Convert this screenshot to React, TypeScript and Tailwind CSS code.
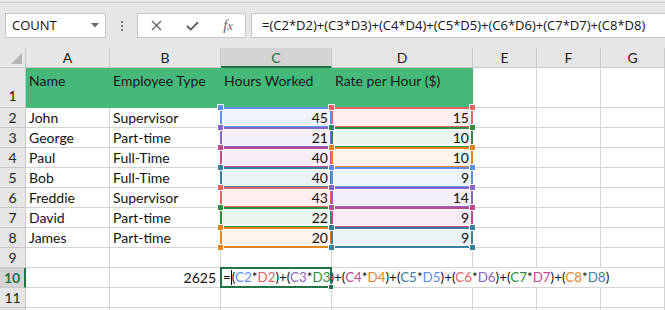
import React from "react";

type Pal = { border: string; bg: string; fill: string; text: string };
const P: Record<string, Pal> = {
  blue: { border: "border-[#5b8ef0]", bg: "bg-[#5b8ef0]", fill: "bg-[#eef3fd]", text: "text-[#5b8ef0]" },
  red: { border: "border-[#e8605f]", bg: "bg-[#e8605f]", fill: "bg-[#fdefef]", text: "text-[#e8605f]" },
  purple: { border: "border-[#8b62c8]", bg: "bg-[#8b62c8]", fill: "bg-[#f3eff9]", text: "text-[#8b62c8]" },
  green: { border: "border-[#2e8c40]", bg: "bg-[#2e8c40]", fill: "bg-[#ebf4ed]", text: "text-[#2e8c40]" },
  magenta: { border: "border-[#c1478e]", bg: "bg-[#c1478e]", fill: "bg-[#f8edf4]", text: "text-[#c1478e]" },
  orange: { border: "border-[#e5841f]", bg: "bg-[#e5841f]", fill: "bg-[#fcf3ea]", text: "text-[#e5841f]" },
  teal: { border: "border-[#3a7f9e]", bg: "bg-[#3a7f9e]", fill: "bg-[#ebf2f5]", text: "text-[#3a7f9e]" },
};

const rows: [string, string, number, number, string, string][] = [
  ["John", "Supervisor", 45, 15, "blue", "red"],
  ["George", "Part-time", 21, 10, "purple", "green"],
  ["Paul", "Full-Time", 40, 10, "magenta", "orange"],
  ["Bob", "Full-Time", 40, 9, "teal", "blue"],
  ["Freddie", "Supervisor", 43, 14, "red", "purple"],
  ["David", "Part-time", 22, 9, "green", "magenta"],
  ["James", "Part-time", 20, 9, "orange", "teal"],
];

const grid = "border-r border-b border-[#d4d4d4]";
const rowHead =
  "h-5 flex items-center justify-center bg-[#e6e6e6] border-r border-b border-[#c8c8c8] text-[14px] text-[#222]";

function Handle({ c, pos }: { c: Pal; pos: string }) {
  return <div className={`absolute w-[7px] h-[7px] border border-white ${c.bg} ${pos}`} />;
}

function RefCell({ v, c }: { v: number; c: Pal }) {
  return (
    <div className={`relative h-5 ${grid}`}>
      <div className={`absolute inset-[2px] ${c.fill}`} />
      <div className={`absolute inset-[-1px] border-2 ${c.border}`} />
      <Handle c={c} pos="left-[-4px] top-[-4px]" />
      <Handle c={c} pos="right-[-4px] top-[-4px]" />
      <Handle c={c} pos="left-[-4px] bottom-[-4px]" />
      <Handle c={c} pos="right-[-4px] bottom-[-4px]" />
      <div className="relative h-full flex items-end justify-end pr-[3px] leading-[19px]">{v}</div>
    </div>
  );
}

function Txt({ children, right }: { children?: React.ReactNode; right?: boolean }) {
  return (
    <div
      className={`h-5 ${grid} flex items-end leading-[19px] whitespace-nowrap ${
        right ? "justify-end pr-[4px]" : "pl-[3px]"
      }`}
    >
      {children}
    </div>
  );
}

function Formula() {
  const parts: [string, string][] = [];
  rows.forEach((r, i) => {
    if (i > 0) parts.push(["+", ""]);
    parts.push(["(", ""]);
    parts.push([`C${i + 2}`, P[r[4]].text]);
    parts.push(["*", ""]);
    parts.push([`D${i + 2}`, P[r[5]].text]);
    parts.push([")", ""]);
  });
  return (
    <span>
      {parts.map((p, i) => (
        <span key={i} className={p[1]}>
          {p[0]}
        </span>
      ))}
    </span>
  );
}

export default function App() {
  const colHead =
    "h-5 flex items-center justify-center bg-[#e6e6e6] border-r border-b border-[#c8c8c8] text-[14px] text-[#222]";
  return (
    <div className="w-[665px] h-[310px] overflow-hidden bg-white font-['Lato',sans-serif] text-[14px] text-[#111]">
      {/* toolbar */}
      <div className="h-[48px] bg-[#e6e6e6] pt-[2px]">
        <div className="h-full border-t border-[#cacaca] flex items-start pt-[10px] font-['Open_Sans',sans-serif]">
          <div className="ml-[5px] w-[101px] h-[25px] bg-white border border-[#c6c6c6] flex items-center pl-[6px] pr-[6px] text-[13px] text-[#111]">
            <span className="flex-1">COUNT</span>
            <svg width="8" height="5" viewBox="0 0 8 5">
              <path d="M0 0 L8 0 L4 4.5 Z" fill="#6b6b6b" />
            </svg>
          </div>
          <div className="w-[31px] h-[25px] flex flex-col items-center justify-center gap-[2px]">
            <div className="w-[2px] h-[2px] bg-[#7a7a7a]" />
            <div className="w-[2px] h-[2px] bg-[#7a7a7a]" />
            <div className="w-[2px] h-[2px] bg-[#7a7a7a]" />
          </div>
          <div className="w-[109px] h-[25px] bg-white border border-[#c6c6c6] flex items-center">
            <div className="w-[36px] flex justify-center pl-[1px]">
              <svg width="11" height="11" viewBox="0 0 11 11">
                <path d="M1 1 L10 10 M10 1 L1 10" stroke="#666" strokeWidth="1.4" />
              </svg>
            </div>
            <div className="w-[37px] flex justify-center">
              <svg width="13" height="10" viewBox="0 0 13 10">
                <path d="M1 5 L4.8 8.6 L12 1.2" stroke="#555" strokeWidth="1.8" fill="none" />
              </svg>
            </div>
            <div className="w-[34px] flex justify-center">
              <span className="font-['Liberation_Serif',serif] italic text-[15px] leading-none text-[#666]">
                f<span className="text-[12px]">x</span>
              </span>
            </div>
          </div>
          <div className="ml-[5px] flex-1 h-[25px] bg-white border border-r-0 border-[#c6c6c6] flex items-center pl-[10px] text-[13px] text-[#111] whitespace-nowrap">
            =(C2*D2)+(C3*D3)+(C4*D4)+(C5*D5)+(C6*D6)+(C7*D7)+(C8*D8)
          </div>
        </div>
      </div>

      {/* sheet */}
      <div className="grid grid-cols-[26px_84px_111px_111px_141px_64px_64px_64px]">
        {/* column header */}
        <div className="h-5 bg-[#e6e6e6] border-r border-b border-[#c8c8c8] relative">
          <svg className="absolute right-[3px] bottom-[3px]" width="11" height="11" viewBox="0 0 11 11">
            <path d="M11 0 L11 11 L0 11 Z" fill="#b5b5b5" />
          </svg>
        </div>
        <div className={colHead}>A</div>
        <div className={colHead}>B</div>
        <div className="h-5 flex items-center justify-center bg-[#d3d3d3] border-r border-[#c8c8c8] border-b-2 border-b-[#217346] text-[14px] text-[#217346]">
          C
        </div>
        <div className={colHead}>D</div>
        <div className={colHead}>E</div>
        <div className={colHead}>F</div>
        <div className={colHead}>G</div>

        {/* row 1 */}
        <div className="h-10 flex items-end justify-center pb-[1px] bg-[#e6e6e6] border-r border-b border-[#c8c8c8] text-[14px] text-[#222]">
          1
        </div>
        <div className="col-span-4 h-10 bg-[#45b87a] grid grid-cols-[84px_111px_111px_141px] text-[#1a1a1a]">
          <div className="pl-[3px] pt-[2px]">Name</div>
          <div className="pl-[3px] pt-[2px]">Employee Type</div>
          <div className="pl-[3px] pt-[2px]">Hours Worked</div>
          <div className="pl-[3px] pt-[2px]">Rate per Hour ($)</div>
        </div>
        <div className={`h-10 ${grid}`} />
        <div className={`h-10 ${grid}`} />
        <div className={`h-10 ${grid}`} />

        {rows.map((r, i) => (
          <React.Fragment key={i}>
            <div className={rowHead}>{i + 2}</div>
            <Txt>{r[0]}</Txt>
            <Txt>{r[1]}</Txt>
            <RefCell v={r[2]} c={P[r[4]]} />
            <RefCell v={r[3]} c={P[r[5]]} />
            <Txt />
            <Txt />
            <Txt />
          </React.Fragment>
        ))}

        {/* row 9 */}
        <div className={rowHead}>9</div>
        <Txt />
        <Txt />
        <Txt />
        <Txt />
        <Txt />
        <Txt />
        <Txt />

        {/* row 10 */}
        <div className="h-5 flex items-center justify-center bg-[#d3d3d3] border-b border-[#c8c8c8] border-r-2 border-r-[#217346] text-[14px] font-bold text-[#217346]">
          10
        </div>
        <Txt />
        <Txt right>2625</Txt>
        <div className={`relative h-5 ${grid}`}>
          <div className="absolute left-0 top-0 h-[19px] w-[392px] bg-white pl-[2px] flex items-end leading-[19px] whitespace-nowrap text-[13.4px]">
            <span>=</span>
            <span className="inline-block w-px h-[15px] bg-black mb-[2px]" />
            <Formula />
          </div>
          <div className="absolute inset-[-1px] border-2 border-[#217346]" />
          <div className="absolute right-[-3px] bottom-[-3px] w-[6px] h-[6px] bg-[#217346] border border-white" />
        </div>
        <Txt />
        <Txt />
        <Txt />
        <Txt />

        {/* row 11 */}
        <div className={rowHead}>11</div>
        <Txt />
        <Txt />
        <Txt />
        <Txt />
        <Txt />
        <Txt />
        <Txt />

        {/* row 12 partial */}
        <div className={rowHead}></div>
        <Txt />
        <Txt />
        <Txt />
        <Txt />
        <Txt />
        <Txt />
        <Txt />
      </div>
    </div>
  );
}
